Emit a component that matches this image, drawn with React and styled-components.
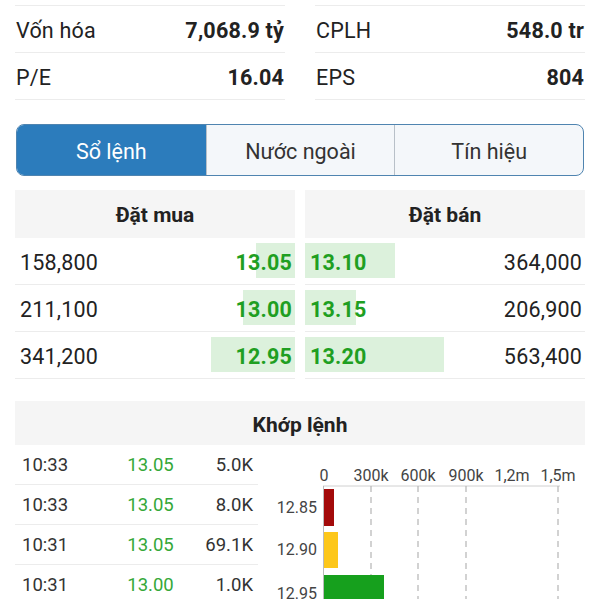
import styled, { createGlobalStyle } from 'styled-components';

const stats = [
    [{ label: 'Vốn hóa', value: '7,068.9 tỷ' }, { label: 'P/E', value: '16.04' }],
    [{ label: 'CPLH', value: '548.0 tr' }, { label: 'EPS', value: '804' }],
];

const tabs = ['Sổ lệnh', 'Nước ngoài', 'Tín hiệu'];

const bids = [
    { vol: 158800, price: '13.05' },
    { vol: 211100, price: '13.00' },
    { vol: 341200, price: '12.95' },
];

const asks = [
    { vol: 364000, price: '13.10' },
    { vol: 206900, price: '13.15' },
    { vol: 563400, price: '13.20' },
];

const trades = [
    { time: '10:33', price: '13.05', vol: '5.0K' },
    { time: '10:33', price: '13.05', vol: '8.0K' },
    { time: '10:31', price: '13.05', vol: '69.1K' },
    { time: '10:31', price: '13.00', vol: '1.0K' },
];

const BOOK_SCALE = 1135000;
const fmt = (n) => n.toLocaleString('en-US');

const VolumeChart = () => {
    const ticks = [
        { x: 66, label: '0' },
        { x: 113, label: '300k', grid: true },
        { x: 160, label: '600k', grid: true },
        { x: 208, label: '900k', grid: true },
        { x: 254, label: '1,2m' },
        { x: 300, label: '1,5m', grid: true },
    ];
    const bars = [
        { label: '12.85', y: 44, h: 37, w: 10, color: '#a30a0a' },
        { label: '12.90', y: 87, h: 36, w: 14, color: '#fdc71a' },
        { label: '12.95', y: 130, h: 37, w: 60, color: '#16a01d' },
    ];
    return (
        <svg width="327" height="154" viewBox="0 0 327 154">
            {ticks.map((t) => (
                <text key={t.label} x={t.x} y="36" fontSize="16" fill="#444" textAnchor="middle" fontFamily="Roboto, sans-serif">
                    {t.label}
                </text>
            ))}
            <line x1="65" y1="41" x2="302" y2="41" stroke="#d0d0d0" strokeWidth="1" />
            {ticks.filter((t) => t.grid).map((t) => (
                <line key={`g${t.label}`} x1={t.x} y1="41" x2={t.x} y2="154" stroke="#b5b5b5" strokeWidth="1.2" strokeDasharray="6 5" />
            ))}
            <line x1="65.5" y1="41" x2="65.5" y2="154" stroke="#bbb" strokeWidth="1" />
            {bars.map((b) => (
                <g key={b.label}>
                    <rect x="66" y={b.y} width={b.w} height={b.h} fill={b.color} />
                    <text x="59" y={b.y + b.h / 2 + 5} fontSize="16" fill="#444" textAnchor="end" fontFamily="Roboto, sans-serif">
                        {b.label}
                    </text>
                </g>
            ))}
        </svg>
    );
};

const App = () => {
    return (
        <Page>
            <GlobalStyle />

            <StatGrid>
                {stats.map((col, ci) => (
                    <StatCol key={`col${ci}`}>
                        {col.map((s) => (
                            <StatRow key={s.label}>
                                <span>{s.label}</span>
                                <StatValue>{s.value}</StatValue>
                            </StatRow>
                        ))}
                    </StatCol>
                ))}
            </StatGrid>

            <Tabs>
                {tabs.map((t, i) => (
                    <Tab key={t} $active={i === 0}>{t}</Tab>
                ))}
            </Tabs>

            <Book>
                <BookSide>
                    <SectionHeader>Đặt mua</SectionHeader>
                    {bids.map((b) => (
                        <BookRow key={b.price}>
                            <Qty>{fmt(b.vol)}</Qty>
                            <DepthBar $side="bid" style={{ width: `${(b.vol / BOOK_SCALE) * 100}%` }} />
                            <BookPrice>{b.price}</BookPrice>
                        </BookRow>
                    ))}
                </BookSide>
                <BookSide>
                    <SectionHeader>Đặt bán</SectionHeader>
                    {asks.map((a) => (
                        <BookRow key={a.price}>
                            <DepthBar $side="ask" style={{ width: `${(a.vol / BOOK_SCALE) * 100}%` }} />
                            <BookPrice>{a.price}</BookPrice>
                            <Qty>{fmt(a.vol)}</Qty>
                        </BookRow>
                    ))}
                </BookSide>
            </Book>

            <Matched>
                <MatchedHeader>Khớp lệnh</MatchedHeader>
                <MatchedBody>
                    <TradeList>
                        {trades.map((t, i) => (
                            <TradeRow key={`trade${i}`}>
                                <span>{t.time}</span>
                                <TradePrice>{t.price}</TradePrice>
                                <TradeVol>{t.vol}</TradeVol>
                            </TradeRow>
                        ))}
                    </TradeList>
                    <ChartBox>
                        <VolumeChart />
                    </ChartBox>
                </MatchedBody>
            </Matched>
        </Page>
    );
};

const GlobalStyle = createGlobalStyle`
    body {
        margin: 0;
        background: #fff;
        font-family: Roboto, "Noto Sans", sans-serif;
        color: #222;
    }
`;

const Page = styled.div`
    width: 600px;
    height: 600px;
    overflow: hidden;
    padding-top: 5px;
    box-sizing: border-box;
`;

const StatGrid = styled.div`
    display: grid;
    grid-template-columns: 1fr 1fr;
    column-gap: 30px;
    padding: 0 15px;
`;

const StatCol = styled.div`
    display: flex;
    flex-direction: column;
    border-bottom: 1px solid #ececec;
`;

const StatRow = styled.div`
    height: 47px;
    box-sizing: border-box;
    padding: 3px 1px 0;
    border-top: 1px solid #ececec;
    display: flex;
    align-items: center;
    justify-content: space-between;
    font-size: 21.5px;
    letter-spacing: 0.2px;
`;

const StatValue = styled.span`
    font-weight: bold;
`;

const Tabs = styled.div`
    margin: 24px 16px 0;
    height: 52px;
    display: grid;
    grid-template-columns: repeat(3, 1fr);
    border: 1.5px solid #4f84b0;
    border-radius: 8px;
    overflow: hidden;
    box-sizing: border-box;
    background: #f4f7fa;
`;

const Tab = styled.div`
    display: flex;
    align-items: center;
    justify-content: center;
    padding-top: 3px;
    font-size: 21.5px;
    color: ${(p) => (p.$active ? '#fff' : '#333')};
    background: ${(p) => (p.$active ? '#2c7cbc' : 'transparent')};
    & + & {
        border-left: 1px solid #b8c0c8;
    }
`;

const Book = styled.div`
    margin-top: 14px;
    padding: 0 15px;
    display: grid;
    grid-template-columns: 1fr 1fr;
    column-gap: 10px;
`;

const BookSide = styled.div`
    display: flex;
    flex-direction: column;
`;

const SectionHeader = styled.div`
    height: 48px;
    box-sizing: border-box;
    padding-top: 2px;
    background: #f5f5f5;
    display: flex;
    align-items: center;
    justify-content: center;
    font-weight: bold;
    font-size: 21px;
`;

const BookRow = styled.div`
    position: relative;
    height: 47px;
    box-sizing: border-box;
    border-bottom: 1px solid #ececec;
    display: flex;
    align-items: center;
    justify-content: space-between;
    padding: 2px 3px 0 5px;
    font-size: 21.5px;
    letter-spacing: 0.2px;
`;

const Qty = styled.span`
    position: relative;
`;

const DepthBar = styled.div`
    position: absolute;
    top: 5px;
    bottom: 6px;
    ${(p) => (p.$side === 'bid' ? 'right: 0;' : 'left: 0;')}
    background: #dcf1dc;
`;

const BookPrice = styled.span`
    position: relative;
    font-weight: bold;
    color: #1f9f22;
`;

const Matched = styled.div`
    margin-top: 22px;
    padding: 0 15px;
`;

const MatchedHeader = styled.div`
    height: 44px;
    box-sizing: border-box;
    padding-top: 4px;
    background: #f5f5f5;
    display: flex;
    align-items: center;
    justify-content: center;
    font-weight: bold;
    font-size: 21px;
`;

const MatchedBody = styled.div`
    display: flex;
`;

const TradeList = styled.div`
    width: 243px;
    display: flex;
    flex-direction: column;
`;

const TradeRow = styled.div`
    height: 39px;
    border-bottom: 1px solid #ececec;
    display: grid;
    grid-template-columns: 1fr 1fr 1fr;
    align-items: center;
    padding: 0 5px 0 7px;
    font-size: 18.5px;
    color: #333;
`;

const TradePrice = styled.span`
    color: #35a839;
    text-align: center;
    padding-left: 26px;
`;

const TradeVol = styled.span`
    text-align: right;
`;

const ChartBox = styled.div`
    flex: 1;
`;

export default App;
